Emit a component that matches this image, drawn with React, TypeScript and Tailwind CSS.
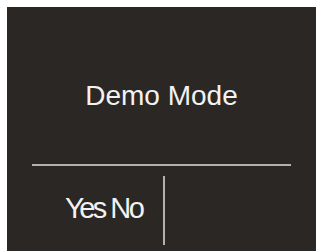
export default function App() {
  return (
    <div className="w-[323px] h-[251px] bg-white pt-[7px] pl-[7px] pr-[7px] overflow-hidden">
      <div className="h-full bg-[#2b2725] flex flex-col" style={{ fontFamily: '"Liberation Sans", Arial, sans-serif' }}>
        {/* Title */}
        <div className="h-[157px] pt-[73px] text-center text-[28px] leading-[32px] text-[#f2f2f2]">
          Demo Mode
        </div>

        {/* Divider */}
        <div className="mx-[25px] h-[2px] bg-[#b3b1ae]" />

        {/* Options */}
        <div className="flex flex-1">
          <div className="w-[156px] pl-[58px] pt-[26px] text-[29px] leading-[32px] tracking-[-2.5px] text-[#f2f2f2] whitespace-nowrap">
            Yes No
          </div>
          <div className="w-[2px] mt-[10px] h-[69px] bg-[#b3b1ae]" />
        </div>
      </div>
    </div>
  );
}
